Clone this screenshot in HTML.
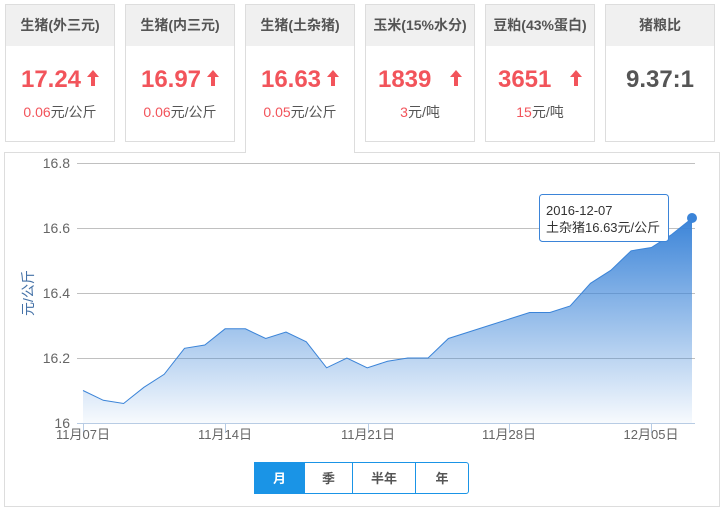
<!DOCTYPE html>
<html><head><meta charset="utf-8"><style>
body{margin:0;width:726px;height:511px;background:#fff;font-family:"Liberation Sans","Noto Sans CJK SC",sans-serif;position:relative;overflow:hidden}
.card{position:absolute;top:4px;width:108px;height:136px;border:1px solid #ddd;background:#fff;text-align:center}
.card .h{height:41px;background:#f0f0f0;line-height:41px;font-size:14px;font-weight:bold;color:#555}
.card .v{margin-top:20px;font-size:24px;font-weight:bold;color:#f2545b;line-height:28px}
.card .v svg{vertical-align:middle;margin-left:6px;margin-top:-6px}
.card .s{margin-top:8px;font-size:14px;color:#555}
.card .s b{font-weight:normal;color:#f2545b}
.act{height:148px;border-bottom:none;z-index:2}
.panel{position:absolute;left:4px;top:152px;width:714px;height:353px;border:1px solid #ddd;background:#fff}
.btn{position:absolute;top:462px;height:32px;line-height:32px;text-align:center;font-size:13px;font-weight:bold;color:#555;border:1px solid #1a94e6;box-sizing:border-box}
</style></head><body>
<div class="card" style="left:5px"><div class="h">生猪(外三元)</div><div class="v">17.24<svg width="12" height="16" viewBox="0 0 12 16"><path d="M6 0L12 7H8V16H4V7H0Z" fill="#f2545b"/></svg></div><div class="s"><b>0.06</b>元/公斤</div></div>
<div class="card" style="left:125px"><div class="h">生猪(内三元)</div><div class="v">16.97<svg width="12" height="16" viewBox="0 0 12 16"><path d="M6 0L12 7H8V16H4V7H0Z" fill="#f2545b"/></svg></div><div class="s"><b>0.06</b>元/公斤</div></div>
<div class="card act" style="left:245px"><div class="h">生猪(土杂猪)</div><div class="v">16.63<svg width="12" height="16" viewBox="0 0 12 16"><path d="M6 0L12 7H8V16H4V7H0Z" fill="#f2545b"/></svg></div><div class="s"><b>0.05</b>元/公斤</div></div>
<div class="card" style="left:365px"><div class="h">玉米(15%水分)</div><div class="v">1839 <svg width="12" height="16" viewBox="0 0 12 16" style="margin-left:12px"><path d="M6 0L12 7H8V16H4V7H0Z" fill="#f2545b"/></svg></div><div class="s"><b>3</b>元/吨</div></div>
<div class="card" style="left:485px"><div class="h">豆粕(43%蛋白)</div><div class="v">3651 <svg width="12" height="16" viewBox="0 0 12 16" style="margin-left:12px"><path d="M6 0L12 7H8V16H4V7H0Z" fill="#f2545b"/></svg></div><div class="s"><b>15</b>元/吨</div></div>
<div class="card" style="left:605px"><div class="h">猪粮比</div><div class="v" style="color:#555">9.37:1</div></div>
<div class="panel"></div>
<svg style="position:absolute;left:0;top:0" width="726" height="511">
<defs><linearGradient id="g" gradientUnits="userSpaceOnUse" x1="0" y1="218" x2="0" y2="423"><stop offset="0" stop-color="#3b84d8"/><stop offset="1" stop-color="#3b84d8" stop-opacity="0.04"/></linearGradient></defs>
<g stroke="#c0c0c0" stroke-width="1">
<line x1="77" y1="163.5" x2="695" y2="163.5"/><line x1="77" y1="228.5" x2="695" y2="228.5"/><line x1="77" y1="293.5" x2="695" y2="293.5"/><line x1="77" y1="358.5" x2="695" y2="358.5"/></g>
<path d="M83,390.5 103.3,400.3 123.6,403.5 143.9,387.3 164.2,374.3 184.5,348.3 204.8,345 225.1,328.8 245.4,328.8 265.7,338.5 286,332 306.3,341.8 326.6,367.8 346.9,358 367.2,367.8 387.5,361.3 407.8,358 428.1,358 448.4,338.5 468.7,332 489,325.5 509.3,319 529.6,312.5 549.9,312.5 570.2,306 590.5,283.3 610.8,270.3 631.1,250.8 651.4,247.5 671.7,234.5 692,218.3 L692,423 L83,423Z" fill="url(#g)"/>
<polyline points="83,390.5 103.3,400.3 123.6,403.5 143.9,387.3 164.2,374.3 184.5,348.3 204.8,345 225.1,328.8 245.4,328.8 265.7,338.5 286,332 306.3,341.8 326.6,367.8 346.9,358 367.2,367.8 387.5,361.3 407.8,358 428.1,358 448.4,338.5 468.7,332 489,325.5 509.3,319 529.6,312.5 549.9,312.5 570.2,306 590.5,283.3 610.8,270.3 631.1,250.8 651.4,247.5 671.7,234.5 692,218.3" fill="none" stroke="#3b84d8" stroke-width="1"/>
<line x1="77" y1="423.5" x2="695" y2="423.5" stroke="#b8cce4"/>
<g stroke="#b8cce4"><line x1="83.5" y1="423" x2="83.5" y2="433"/><line x1="225.5" y1="423" x2="225.5" y2="433"/><line x1="368.5" y1="423" x2="368.5" y2="433"/><line x1="509.5" y1="423" x2="509.5" y2="433"/><line x1="651.5" y1="423" x2="651.5" y2="433"/></g>
<circle cx="692" cy="218" r="5" fill="#3b84d8"/>
<g font-size="14" fill="#666" text-anchor="end" font-family="Liberation Sans,sans-serif"><text x="70" y="168">16.8</text><text x="70" y="233">16.6</text><text x="70" y="298">16.4</text><text x="70" y="363">16.2</text><text x="70" y="428">16</text></g>
<g font-size="13" fill="#666" text-anchor="middle" font-family="Liberation Sans,Noto Sans CJK SC,sans-serif"><text x="83" y="439">11月07日</text><text x="225" y="439">11月14日</text><text x="368" y="439">11月21日</text><text x="509" y="439">11月28日</text><text x="651" y="439">12月05日</text></g>
<text transform="translate(33,293) rotate(-90)" text-anchor="middle" font-size="14" fill="#4572a7" font-family="Liberation Sans,Noto Sans CJK SC,sans-serif">元/公斤</text>
<rect x="539.5" y="194.5" width="129" height="47" rx="3" fill="#fff" stroke="#3b84d8"/>
<text x="546" y="215" font-size="13" fill="#333" font-family="Liberation Sans,Noto Sans CJK SC,sans-serif">2016-12-07</text>
<text x="546" y="232" font-size="13" fill="#333" font-family="Liberation Sans,Noto Sans CJK SC,sans-serif">土杂猪16.63元/公斤</text>
</svg>
<div class="btn" style="left:254px;width:51px;background:#1a94e6;color:#fff">月</div>
<div class="btn" style="left:304px;width:49px">季</div>
<div class="btn" style="left:352px;width:64px">半年</div>
<div class="btn" style="left:415px;width:54px;border-radius:0 3px 3px 0">年</div>
</body></html>
